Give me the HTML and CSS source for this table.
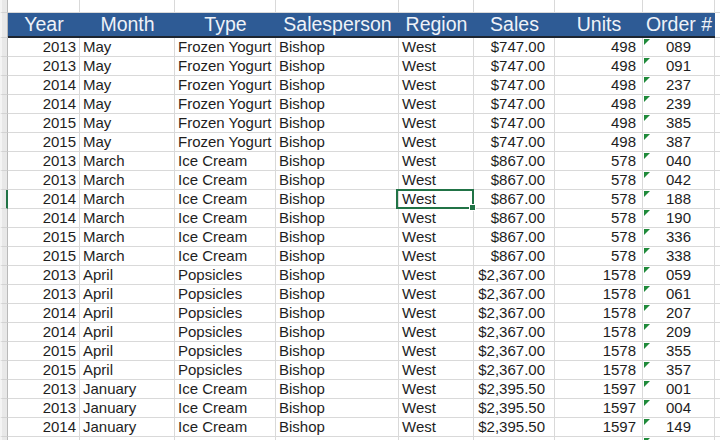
FILE: index.html
```html
<!DOCTYPE html>
<html>
<head>
<meta charset="utf-8">
<link rel="stylesheet" href="styles.css">
</head>
<body>
<div class="sheet">
  <div class="row top"><div class="strip"></div><div class="c"></div><div class="c"></div><div class="c"></div><div class="c"></div><div class="c"></div><div class="c"></div><div class="c"></div><div class="c"></div><div class="c end"></div></div>
  <div class="row head"><div class="strip"></div><div class="h">Year</div><div class="h">Month</div><div class="h">Type</div><div class="h">Salesperson</div><div class="h">Region</div><div class="h">Sales</div><div class="h">Units</div><div class="h">Order #</div><div class="c end"></div></div>

  <div class="row"><div class="strip"></div><div class="c r">2013</div><div class="c">May</div><div class="c">Frozen Yogurt</div><div class="c">Bishop</div><div class="c">West</div><div class="c r money">$747.00</div><div class="c r units">498</div><div class="c ctr flag">089</div><div class="c end"></div></div>
  <div class="row"><div class="strip"></div><div class="c r">2013</div><div class="c">May</div><div class="c">Frozen Yogurt</div><div class="c">Bishop</div><div class="c">West</div><div class="c r money">$747.00</div><div class="c r units">498</div><div class="c ctr flag">091</div><div class="c end"></div></div>
  <div class="row"><div class="strip"></div><div class="c r">2014</div><div class="c">May</div><div class="c">Frozen Yogurt</div><div class="c">Bishop</div><div class="c">West</div><div class="c r money">$747.00</div><div class="c r units">498</div><div class="c ctr flag">237</div><div class="c end"></div></div>
  <div class="row"><div class="strip"></div><div class="c r">2014</div><div class="c">May</div><div class="c">Frozen Yogurt</div><div class="c">Bishop</div><div class="c">West</div><div class="c r money">$747.00</div><div class="c r units">498</div><div class="c ctr flag">239</div><div class="c end"></div></div>
  <div class="row"><div class="strip"></div><div class="c r">2015</div><div class="c">May</div><div class="c">Frozen Yogurt</div><div class="c">Bishop</div><div class="c">West</div><div class="c r money">$747.00</div><div class="c r units">498</div><div class="c ctr flag">385</div><div class="c end"></div></div>
  <div class="row"><div class="strip"></div><div class="c r">2015</div><div class="c">May</div><div class="c">Frozen Yogurt</div><div class="c">Bishop</div><div class="c">West</div><div class="c r money">$747.00</div><div class="c r units">498</div><div class="c ctr flag">387</div><div class="c end"></div></div>
  <div class="row"><div class="strip"></div><div class="c r">2013</div><div class="c">March</div><div class="c">Ice Cream</div><div class="c">Bishop</div><div class="c">West</div><div class="c r money">$867.00</div><div class="c r units">578</div><div class="c ctr flag">040</div><div class="c end"></div></div>
  <div class="row"><div class="strip"></div><div class="c r">2013</div><div class="c">March</div><div class="c">Ice Cream</div><div class="c">Bishop</div><div class="c">West</div><div class="c r money">$867.00</div><div class="c r units">578</div><div class="c ctr flag">042</div><div class="c end"></div></div>
  <div class="row"><div class="strip active"></div><div class="c r">2014</div><div class="c">March</div><div class="c">Ice Cream</div><div class="c">Bishop</div><div class="c sel">West</div><div class="c r money">$867.00</div><div class="c r units">578</div><div class="c ctr flag">188</div><div class="c end"></div></div>
  <div class="row"><div class="strip"></div><div class="c r">2014</div><div class="c">March</div><div class="c">Ice Cream</div><div class="c">Bishop</div><div class="c">West</div><div class="c r money">$867.00</div><div class="c r units">578</div><div class="c ctr flag">190</div><div class="c end"></div></div>
  <div class="row"><div class="strip"></div><div class="c r">2015</div><div class="c">March</div><div class="c">Ice Cream</div><div class="c">Bishop</div><div class="c">West</div><div class="c r money">$867.00</div><div class="c r units">578</div><div class="c ctr flag">336</div><div class="c end"></div></div>
  <div class="row"><div class="strip"></div><div class="c r">2015</div><div class="c">March</div><div class="c">Ice Cream</div><div class="c">Bishop</div><div class="c">West</div><div class="c r money">$867.00</div><div class="c r units">578</div><div class="c ctr flag">338</div><div class="c end"></div></div>
  <div class="row"><div class="strip"></div><div class="c r">2013</div><div class="c">April</div><div class="c">Popsicles</div><div class="c">Bishop</div><div class="c">West</div><div class="c r money">$2,367.00</div><div class="c r units">1578</div><div class="c ctr flag">059</div><div class="c end"></div></div>
  <div class="row"><div class="strip"></div><div class="c r">2013</div><div class="c">April</div><div class="c">Popsicles</div><div class="c">Bishop</div><div class="c">West</div><div class="c r money">$2,367.00</div><div class="c r units">1578</div><div class="c ctr flag">061</div><div class="c end"></div></div>
  <div class="row"><div class="strip"></div><div class="c r">2014</div><div class="c">April</div><div class="c">Popsicles</div><div class="c">Bishop</div><div class="c">West</div><div class="c r money">$2,367.00</div><div class="c r units">1578</div><div class="c ctr flag">207</div><div class="c end"></div></div>
  <div class="row"><div class="strip"></div><div class="c r">2014</div><div class="c">April</div><div class="c">Popsicles</div><div class="c">Bishop</div><div class="c">West</div><div class="c r money">$2,367.00</div><div class="c r units">1578</div><div class="c ctr flag">209</div><div class="c end"></div></div>
  <div class="row"><div class="strip"></div><div class="c r">2015</div><div class="c">April</div><div class="c">Popsicles</div><div class="c">Bishop</div><div class="c">West</div><div class="c r money">$2,367.00</div><div class="c r units">1578</div><div class="c ctr flag">355</div><div class="c end"></div></div>
  <div class="row"><div class="strip"></div><div class="c r">2015</div><div class="c">April</div><div class="c">Popsicles</div><div class="c">Bishop</div><div class="c">West</div><div class="c r money">$2,367.00</div><div class="c r units">1578</div><div class="c ctr flag">357</div><div class="c end"></div></div>
  <div class="row"><div class="strip"></div><div class="c r">2013</div><div class="c">January</div><div class="c">Ice Cream</div><div class="c">Bishop</div><div class="c">West</div><div class="c r money">$2,395.50</div><div class="c r units">1597</div><div class="c ctr flag">001</div><div class="c end"></div></div>
  <div class="row"><div class="strip"></div><div class="c r">2013</div><div class="c">January</div><div class="c">Ice Cream</div><div class="c">Bishop</div><div class="c">West</div><div class="c r money">$2,395.50</div><div class="c r units">1597</div><div class="c ctr flag">004</div><div class="c end"></div></div>
  <div class="row"><div class="strip"></div><div class="c r">2014</div><div class="c">January</div><div class="c">Ice Cream</div><div class="c">Bishop</div><div class="c">West</div><div class="c r money">$2,395.50</div><div class="c r units">1597</div><div class="c ctr flag">149</div><div class="c end"></div></div>
  <div class="row"><div class="strip"></div><div class="c"></div><div class="c"></div><div class="c"></div><div class="c"></div><div class="c"></div><div class="c"></div><div class="c"></div><div class="c flag"></div><div class="c end"></div></div>
</div>
</body>
</html>
```
FILE: styles.css
```css
* { box-sizing: border-box; }
html, body {
  margin: 0;
  padding: 0;
  width: 720px;
  height: 440px;
  overflow: hidden;
  background: #ffffff;
}
.sheet {
  font-family: "Liberation Sans", Arial, sans-serif;
  color: #1e1e1e;
  display: flex;
  flex-direction: column;
}
.row {
  display: grid;
  grid-template-columns: 8px 72px 95px 101px 123px 75px 81px 88px 72px 1fr;
  height: 19px;
  flex: none;
}
.row.top { height: 13px; }
.row.head { height: 25px; }
.strip {
  background: #e8e8e8;
  border-right: 1px solid #b9b9b9;
  border-bottom: 1px solid #d3d3d3;
  border-left: 2px solid #f4f4f4;
}
.strip.active {
  border-right: 2px solid #217346;
}
.c {
  position: relative;
  border-right: 1px solid #d9d9d9;
  border-bottom: 1px solid #d9d9d9;
  font-size: 15px;
  line-height: 18px;
  padding: 0 3px;
  white-space: nowrap;
  overflow: visible;
}
.c.end { border-right: none; }
.r { text-align: right; padding-right: 3px; }
.money { padding-right: 9px; }
.units { padding-right: 6px; }
.ctr { text-align: center; }
.h {
  background: #2e5b95;
  color: #eef2f8;
  font-size: 19.5px;
  line-height: 23px;
  text-align: center;
  border-bottom: 2px solid #1d2530;
  white-space: nowrap;
}
.head .c.end { border-bottom: 1px solid #d9d9d9; }
.flag::before {
  content: "";
  position: absolute;
  left: 1px;
  top: 1px;
  width: 0;
  height: 0;
  border-top: 6px solid #1f8a3a;
  border-right: 6px solid transparent;
}
.sel::after {
  content: "";
  position: absolute;
  left: -3px;
  top: -1px;
  right: -1px;
  bottom: -1px;
  border: 2px solid #217346;
}
.sel::before {
  content: "";
  position: absolute;
  right: -3px;
  bottom: -3px;
  width: 5px;
  height: 5px;
  background: #217346;
  border: 1px solid #ffffff;
  z-index: 2;
}
```
